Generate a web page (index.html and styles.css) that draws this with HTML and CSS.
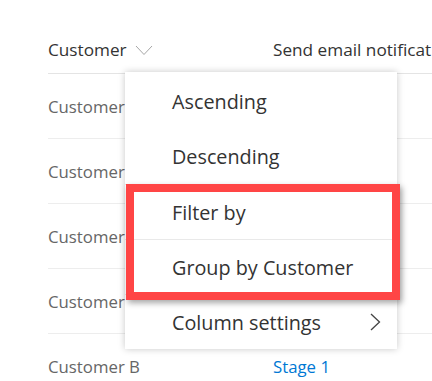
FILE: index.html
```html
<!DOCTYPE html>
<html lang="en">
<head>
    <meta charset="UTF-8">
    <meta name="viewport" content="width=device-width, initial-scale=1.0">
    <title>Customers list</title>
    <link rel="stylesheet" href="styles.css">
</head>
<body>
    <div class="list">
        <div class="row header">
            <div class="cell">
                Customer
                <svg class="sort-icon" width="18" height="11" viewBox="0 0 18 11">
                    <path d="M1 1 L9 9.5 L17 1" fill="none" stroke="#a6a6a6" stroke-width="1"/>
                </svg>
            </div>
            <div class="cell">Send email notification</div>
        </div>
        <div class="row"><div class="cell muted">Customer A</div><div class="cell"></div></div>
        <div class="row"><div class="cell muted">Customer A</div><div class="cell"></div></div>
        <div class="row"><div class="cell muted">Customer B</div><div class="cell"></div></div>
        <div class="row"><div class="cell muted">Customer B</div><div class="cell"></div></div>
        <div class="row"><div class="cell muted">Customer B</div><div class="cell"><a href="#" class="link">Stage 1</a></div></div>
    </div>

    <div class="menu">
        <div class="menu-group">
            <div class="menu-item">Ascending</div>
            <div class="menu-item">Descending</div>
        </div>
        <div class="menu-group">
            <div class="menu-item">Filter by</div>
        </div>
        <div class="menu-group">
            <div class="menu-item">Group by Customer</div>
        </div>
        <div class="menu-group">
            <div class="menu-item">
                Column settings
                <svg class="sub-icon" width="11" height="18" viewBox="0 0 11 18">
                    <path d="M1 1 L9.5 9 L1 17" fill="none" stroke="#444" stroke-width="1.3"/>
                </svg>
            </div>
        </div>
    </div>

    <div class="highlight"></div>
</body>
</html>
```

FILE: styles.css
```css
body {
    margin: 0;
    font-family: "Segoe UI", "Open Sans", sans-serif;
    background-color: white;
    overflow: hidden;
    width: 432px;
    height: 381px;
    position: relative;
}

.list {
    padding-left: 48px;
}

.row {
    display: grid;
    grid-template-columns: 225px 1fr;
    height: 64px;
    align-items: center;
    border-top: 1px solid #ededed;
    font-size: 16.8px;
    white-space: nowrap;
}

.header {
    height: 48px;
    padding-top: 25px;
    border-top: none;
    border-bottom: 1px solid #e4e4e4;
    color: #333;
    font-size: 17.2px;
}

.header + .row {
    border-top: none;
}

.cell {
    display: flex;
    align-items: center;
}

.muted {
    color: #666;
}

.sort-icon {
    margin-left: 8px;
    margin-top: 2px;
}

.link {
    color: #0078d4;
    text-decoration: none;
}

/* dropdown over the header */
.menu {
    position: absolute;
    left: 125px;
    top: 72px;
    width: 272px;
    padding-top: 2px;
    background-color: white;
    box-shadow: 0 0 7px rgba(0, 0, 0, 0.22);
    color: #333;
    font-size: 19.8px;
}

.menu-group {
    border-top: 1px solid #e9e9e9;
}

.menu-group:first-child {
    border-top: none;
}

.menu-item {
    height: 55px;
    padding-left: 47px;
    padding-right: 16px;
    display: flex;
    align-items: center;
}

.menu-group + .menu-group .menu-item {
    height: 54px;
}

.sub-icon {
    margin-left: auto;
}

.highlight {
    position: absolute;
    left: 126px;
    top: 184px;
    width: 258px;
    height: 100px;
    border: 8px solid #ff4545;
    box-shadow: 2px 3px 6px rgba(0, 0, 0, 0.35);
}
```
